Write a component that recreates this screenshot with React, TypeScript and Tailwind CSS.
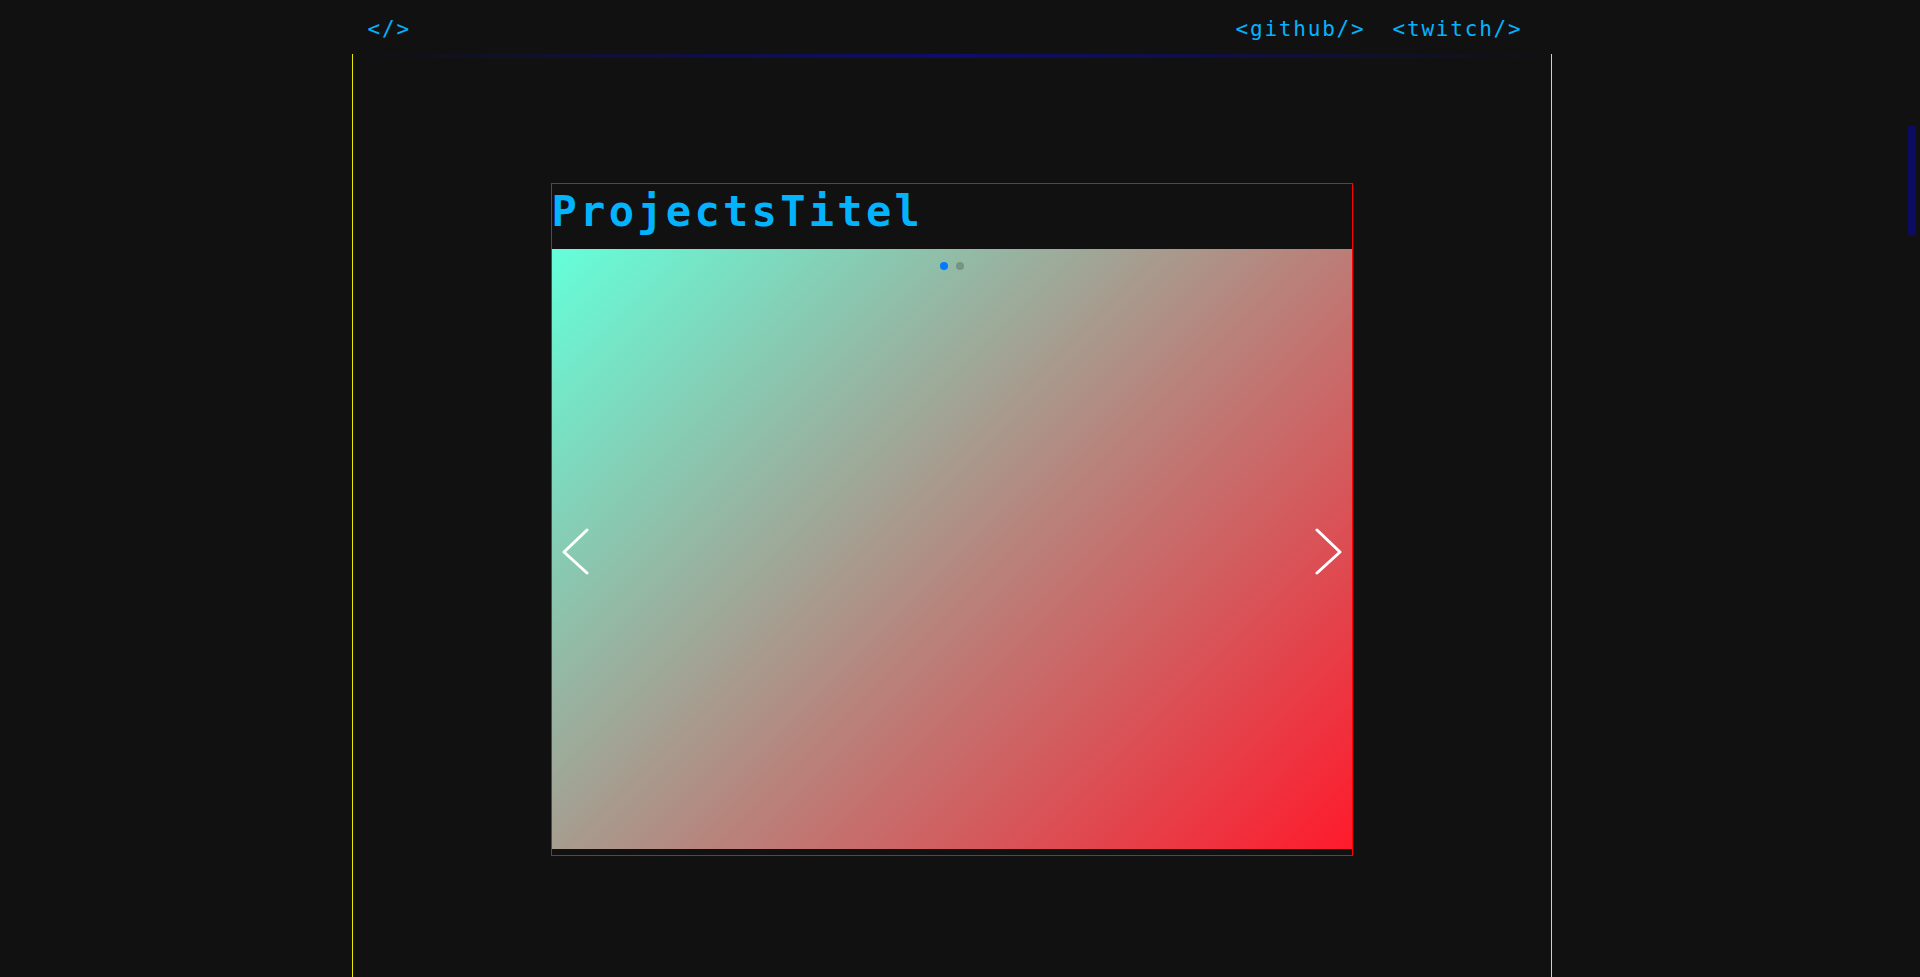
import { useState } from "react";

const slides = [
  "bg-[linear-gradient(135deg,#64ffda,#ff1a2c)]",
  "bg-[linear-gradient(135deg,#ff1a2c,#64ffda)]",
];

function Chevron({ dir }: { dir: "left" | "right" }) {
  return (
    <svg width="28" height="48" viewBox="0 0 28 48" fill="none">
      <polyline
        points={dir === "left" ? "25,2 2,24 25,45" : "3,2 26,24 3,45"}
        stroke="#fff"
        strokeWidth="3"
        strokeLinecap="round"
        strokeLinejoin="round"
      />
    </svg>
  );
}

function ProjectSlider() {
  const [active, setActive] = useState(0);

  return (
    <div className="mx-auto mt-[129px] w-[802px] border border-[#ff0000]">
      <h1 className="h-[65px] text-[42px] font-bold leading-[55px] tracking-[3.3px] text-[#03b3fd]">ProjectsTitel</h1>
      <div className={`relative h-[600px] ${slides[active]}`}>
        {/* bullets */}
        <div className="absolute left-0 right-0 top-[13px] flex justify-center gap-2">
          {slides.map((_, i) => (
            <button
              key={i}
              onClick={() => setActive(i)}
              className={`h-2 w-2 rounded-full ${i === active ? "bg-[#007aff]" : "bg-black/20"}`}
            />
          ))}
        </div>
        <button
          className="absolute left-[10px] top-[279px]"
          onClick={() => setActive((active + slides.length - 1) % slides.length)}
        >
          <Chevron dir="left" />
        </button>
        <button
          className="absolute right-[10px] top-[279px]"
          onClick={() => setActive((active + 1) % slides.length)}
        >
          <Chevron dir="right" />
        </button>
      </div>
      <div className="h-[6px]" />
    </div>
  );
}

export default function App() {
  return (
    <div className="flex h-screen overflow-hidden bg-[#111111] font-['DejaVu_Sans_Mono',monospace]">
      <div className="flex min-w-0 flex-1 flex-col">
        <header className="relative z-10 h-[54px] shrink-0">
          <nav className="mx-auto flex h-full max-w-[1200px] items-center justify-between pl-[16px] pr-[29px] pt-[5px] text-[21px] tracking-[1.8px] text-[#03b3fd]">
            <a href="#">&lt;/&gt;</a>
            <div className="flex gap-[27px]">
              <a href="#">&lt;github/&gt;</a>
              <a href="#">&lt;twitch/&gt;</a>
            </div>
          </nav>
          <div className="absolute left-1/2 top-full h-1 w-[1200px] -translate-x-1/2 bg-gradient-to-r from-transparent via-[#0d0d6e] to-transparent" />
        </header>
        <main className="mx-auto w-[1200px] flex-1 border-x border-[#e8e800]">
          <section>
            <ProjectSlider />
          </section>
        </main>
      </div>
      {/* scrollbar */}
      <div className="w-[17px] shrink-0">
        <div className="ml-[5px] mt-[125px] h-[111px] w-2 rounded-full bg-[#0b0b63]" />
      </div>
    </div>
  );
}
